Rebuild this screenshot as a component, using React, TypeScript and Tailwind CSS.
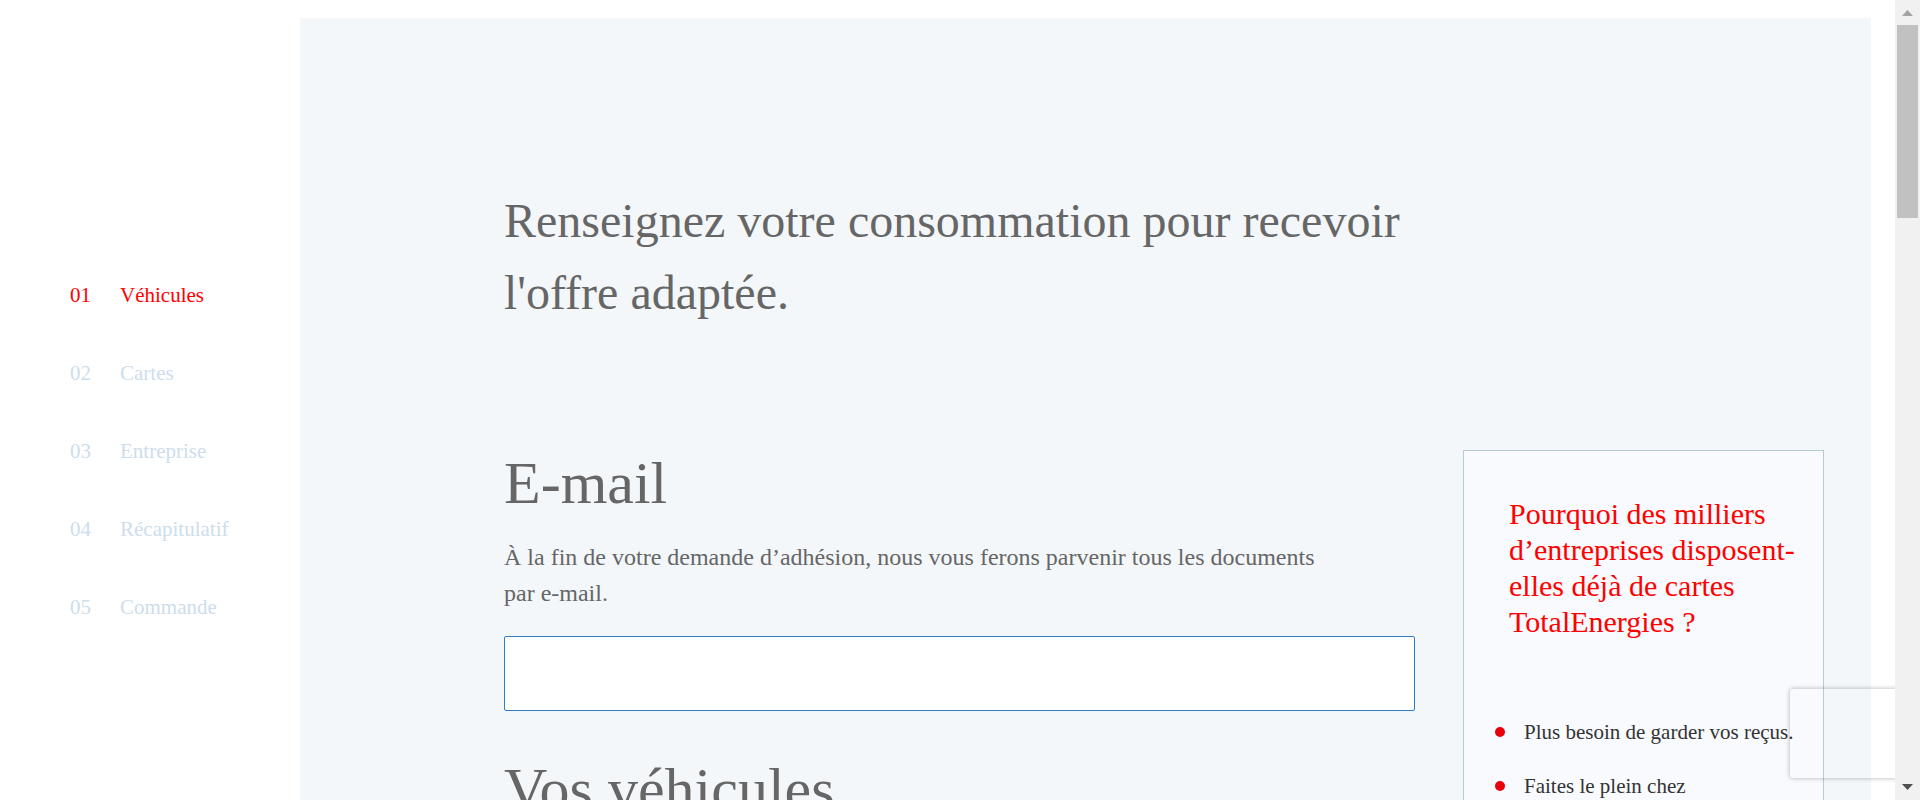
import React from "react";

const steps = [
  { n: "01", label: "Véhicules", active: true },
  { n: "02", label: "Cartes", active: false },
  { n: "03", label: "Entreprise", active: false },
  { n: "04", label: "Récapitulatif", active: false },
  { n: "05", label: "Commande", active: false },
];

export default function App() {
  return (
    <div className="flex h-[800px] w-[1920px] overflow-hidden bg-white font-['Liberation_Serif','Times_New_Roman',serif]">
      <div className="relative flex w-[1895px] shrink-0 overflow-hidden pt-[18px]">
        <aside className="w-[300px] shrink-0 pl-[70px] pt-[262px]">
          <ul className="flex flex-col gap-[48px]">
            {steps.map((s) =>
              s.active ? (
                <li key={s.n} className="flex h-[30px] text-[21px] leading-[30px] text-[#ff0000]">
                  <span className="w-[50px]">{s.n}</span>
                  <span>{s.label}</span>
                </li>
              ) : (
                <li key={s.n} className="flex h-[30px] text-[21px] leading-[30px] text-[#cddded]">
                  <span className="w-[50px]">{s.n}</span>
                  <span>{s.label}</span>
                </li>
              )
            )}
          </ul>
        </aside>

        <main className="w-[1571px] shrink-0 bg-[#f3f7fa] pl-[204px] pr-[47px] pt-[167px]">
          <h1 className="w-[911px] text-[48px] font-normal leading-[72px] text-[#666666]">
            Renseignez votre consommation pour recevoir l'offre adaptée.
          </h1>

          <div className="mt-[121px] flex items-start gap-[48px]">
            <div className="w-[911px] shrink-0">
              <h2 className="text-[60px] font-normal leading-[66px] text-[#666666]">E-mail</h2>
              <p className="mt-[23px] max-w-[830px] text-[24px] leading-[36px] text-[#666666]">
                À la fin de votre demande d’adhésion, nous vous ferons parvenir tous les documents par e-mail.
              </p>
              <input
                type="email"
                className="mt-[25px] block h-[75px] w-full rounded-[2px] border border-[#2d7cc0] bg-white px-4 text-[24px] outline-none"
              />
              <h2 className="mt-[45px] text-[60px] font-normal leading-[66px] text-[#666666]">Vos véhicules</h2>
            </div>

            <div className="w-[361px] shrink-0 border border-[#b5ccd6] bg-[#f8fafd] pb-[40px] pl-[30px] pr-[20px] pt-[45px]">
              <h3 className="pl-[15px] text-[30px] font-normal leading-[36px] text-[#ff0000]">
                Pourquoi des milliers d’entreprises disposent-elles déjà de cartes TotalEnergies ?
              </h3>
              <ul className="mt-[77px] flex flex-col gap-[24px]">
                <li className="flex items-start text-[21px] leading-[30px] text-[#333333]">
                  <span className="ml-[1px] mt-[10px] h-[10px] w-[10px] shrink-0 rounded-full bg-[#e8000b]" />
                  <span className="ml-[19px]">Plus besoin de garder vos reçus.</span>
                </li>
                <li className="flex items-start text-[21px] leading-[30px] text-[#333333]">
                  <span className="ml-[1px] mt-[10px] h-[10px] w-[10px] shrink-0 rounded-full bg-[#e8000b]" />
                  <span className="ml-[19px]">
                    Faites le plein chez
                    <br />
                    TotalEnergies.
                  </span>
                </li>
              </ul>
            </div>
          </div>
        </main>

        <div className="absolute left-[1790px] top-[689px] h-[89px] w-[256px] rounded-[3px] shadow-[0_0_5px_rgba(0,0,0,0.3)]" />
      </div>

      <div className="flex w-[25px] shrink-0 flex-col items-center bg-[#f1f1f1]">
        <svg className="mt-[10px]" width="11" height="6" viewBox="0 0 11 6">
          <path d="M5.5 0 L11 6 L0 6 Z" fill="#a3a3a3" />
        </svg>
        <div className="mt-[9px] h-[193px] w-[21px] bg-[#c1c1c1]" />
        <div className="flex-1" />
        <svg className="mb-[10px]" width="11" height="6" viewBox="0 0 11 6">
          <path d="M0 0 L11 0 L5.5 6 Z" fill="#505050" />
        </svg>
      </div>
    </div>
  );
}
